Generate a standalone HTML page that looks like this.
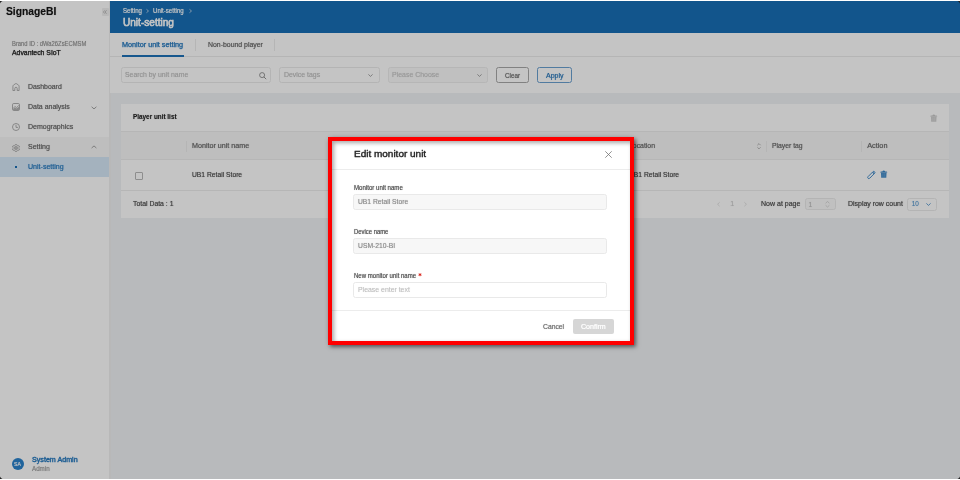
<!DOCTYPE html>
<html><head><meta charset="utf-8">
<style>
*{box-sizing:border-box;margin:0;padding:0}
html,body{width:960px;height:480px;overflow:hidden;background:#fff;font-family:"Liberation Sans",sans-serif;position:relative}
#root{position:absolute;left:0;top:0;width:960px;height:480px;will-change:transform;overflow:hidden}
.a{position:absolute}
.t{position:absolute;white-space:pre;line-height:1;transform-origin:0 0}
svg{position:absolute;overflow:visible}
</style></head><body><div id="root">
<!-- base app -->
<div class="a" style="left:0;top:1px;width:960px;height:478px;background:#f0f2f5"></div>
<!-- sidebar -->
<div class="a" style="left:0;top:1px;width:111px;height:478px;background:#fff;border-right:2px solid #f0f0f0"></div>
<div class="a" style="left:101.5px;top:7.5px;width:7px;height:8px;background:#f0f0f0;border-radius:1px"></div>
<svg style="left:103px;top:9.5px" width="4" height="4" viewBox="0 0 4 4"><path d="M1.9 0.3 L0.4 2 L1.9 3.7 M3.6 0.3 L2.1 2 L3.6 3.7" fill="none" stroke="#9a9a9a" stroke-width="0.6"/></svg>

<svg style="left:12px;top:83px" width="8" height="8" viewBox="0 0 8 8"><path d="M0.9 7.5 V3.2 Q0.9 2.6 1.4 2.2 L3.3 0.8 Q4 0.3 4.7 0.8 L6.6 2.2 Q7.1 2.6 7.1 3.2 V7.5 H5.2 V5.6 Q5.2 4.2 4 4.2 Q2.8 4.2 2.8 5.6 V7.5 Z" fill="none" stroke="#9c9c9c" stroke-width="0.8" stroke-linejoin="round"/></svg>
<svg style="left:12px;top:103px" width="8" height="8" viewBox="0 0 8 8"><rect x="0.5" y="0.5" width="7" height="7" rx="1.3" fill="none" stroke="#9c9c9c" stroke-width="0.8"/><path d="M1.2 5.6 L2.9 3.4 L4.4 4.6 L6.9 2.4" fill="none" stroke="#9a9a9a" stroke-width="0.7"/><path d="M1 7 V6.2 L2.9 4.6 L4.4 5.6 L7 3.8 V7 Z" fill="#b4b4b4"/></svg>
<svg style="left:91px;top:105.8px" width="6" height="4" viewBox="0 0 6 4"><path d="M0.6 0.8 L3 2.9 L5.4 0.8" fill="none" stroke="#8c8c8c" stroke-width="0.8"/></svg>
<svg style="left:12px;top:123px" width="8" height="8" viewBox="0 0 8 8"><circle cx="4" cy="4" r="3.5" fill="none" stroke="#9c9c9c" stroke-width="0.8"/><path d="M4 1.9 V4.4 H6" fill="none" stroke="#9c9c9c" stroke-width="0.8"/></svg>

<div class="a" style="left:0;top:137px;width:109px;height:20px;background:#f8f8f8"></div>
<svg style="left:12px;top:143.7px" width="8" height="8" viewBox="0 0 8 8"><path d="M3.3 0.5 H4.7 L5 1.5 L5.9 2 L6.9 1.7 L7.6 2.9 L6.8 3.6 V4.4 L7.6 5.1 L6.9 6.3 L5.9 6 L5 6.5 L4.7 7.5 H3.3 L3 6.5 L2.1 6 L1.1 6.3 L0.4 5.1 L1.2 4.4 V3.6 L0.4 2.9 L1.1 1.7 L2.1 2 L3 1.5 Z" fill="none" stroke="#9c9c9c" stroke-width="0.75" stroke-linejoin="round"/><circle cx="4" cy="4" r="1.3" fill="none" stroke="#8a8a8a" stroke-width="0.85"/></svg>
<svg style="left:91px;top:145px" width="6" height="4" viewBox="0 0 6 4"><path d="M0.6 3 L3 0.9 L5.4 3" fill="none" stroke="#8c8c8c" stroke-width="0.8"/></svg>

<div class="a" style="left:0;top:157px;width:109px;height:20px;background:#d6e8f7"></div>
<div class="a" style="left:15px;top:166px;width:2px;height:2px;background:#1a6fb5"></div>

<div class="a" style="left:11.8px;top:457.9px;width:12.6px;height:12.6px;border-radius:50%;background:#2a82cc"></div>

<!-- header -->
<div class="a" style="left:110px;top:1px;width:850px;height:32px;background:#186fb6"></div>
<svg style="left:146px;top:8.8px" width="3" height="4" viewBox="0 0 3 4"><path d="M0.5 0.3 L2.5 2 L0.5 3.7" fill="none" stroke="#dfe8f0" stroke-width="0.7"/></svg>
<svg style="left:189px;top:8.8px" width="3" height="4" viewBox="0 0 3 4"><path d="M0.5 0.3 L2.5 2 L0.5 3.7" fill="none" stroke="#dfe8f0" stroke-width="0.7"/></svg>

<!-- tabs -->
<div class="a" style="left:110px;top:33px;width:850px;height:24px;background:#fff;border-bottom:1px solid #ececec"></div>
<div class="a" style="left:122px;top:55px;width:62px;height:2px;background:#1f72b8"></div>
<div class="a" style="left:195px;top:39px;width:1px;height:12px;background:#ececec"></div>
<div class="a" style="left:274px;top:39px;width:1px;height:12px;background:#ececec"></div>

<!-- filters -->
<div class="a" style="left:110px;top:57px;width:850px;height:36px;background:#fff"></div>
<div class="a" style="left:120.5px;top:67.3px;width:150.3px;height:15.7px;border:1px solid #ebebeb;border-radius:2.5px"></div>
<svg style="left:259.3px;top:71.7px" width="8" height="8" viewBox="0 0 8 8"><circle cx="3.1" cy="3.1" r="2.5" fill="none" stroke="#8c8c8c" stroke-width="0.9"/><path d="M4.9 4.9 L7.2 7.2" stroke="#8c8c8c" stroke-width="0.95"/></svg>
<div class="a" style="left:279.4px;top:67.3px;width:100.2px;height:15.7px;border:1px solid #ebebeb;border-radius:2.5px"></div>
<svg style="left:368px;top:73.5px" width="5" height="3" viewBox="0 0 5 3"><path d="M0.4 0.4 L2.5 2.4 L4.6 0.4" fill="none" stroke="#8c8c8c" stroke-width="0.8"/></svg>
<div class="a" style="left:387.7px;top:67.3px;width:100.3px;height:15.5px;border:1px solid #ededed;border-radius:2.5px;background:#fafafa"></div>
<svg style="left:476.5px;top:73.5px" width="5" height="3" viewBox="0 0 5 3"><path d="M0.4 0.4 L2.5 2.4 L4.6 0.4" fill="none" stroke="#8c8c8c" stroke-width="0.8"/></svg>
<div class="a" style="left:496px;top:67.3px;width:33.4px;height:15.7px;border:1px solid #a8a8a8;border-bottom-width:1.5px;border-radius:2.5px"></div>
<div class="a" style="left:537.3px;top:67.3px;width:34.4px;height:15.7px;border:1px solid #6aa0d0;border-bottom-width:1.5px;border-radius:2.5px"></div>

<!-- card -->
<div class="a" style="left:121px;top:104px;width:828px;height:114px;background:#fff"></div>
<svg style="left:929.5px;top:113.7px" width="7.5" height="8" viewBox="0 0 7.5 8"><path d="M0.9 2.4 H6.6 L6.3 7.7 H1.2 Z" fill="#d0d0d0"/><path d="M0.2 2.6 Q0.2 1.4 1.3 1.4 H2.4 Q2.7 0.6 3.75 0.6 Q4.8 0.6 5.1 1.4 H6.2 Q7.3 1.4 7.3 2.6 Z" fill="#c8c8c8"/><path d="M2.9 3.4 V6.8 M4.6 3.4 V6.8" stroke="#e0e0e0" stroke-width="0.5"/></svg>
<div class="a" style="left:121px;top:131px;width:828px;height:29px;background:#f7f7f7;border-top:1px solid #ededed;border-bottom:1px solid #ededed"></div>
<div class="a" style="left:185.5px;top:140.5px;width:1px;height:11px;background:#ececec"></div>
<svg style="left:756.5px;top:142.8px" width="4" height="6.5" viewBox="0 0 4 6.5"><path d="M0.4 2.2 L2 0.6 L3.6 2.2 M0.4 4.3 L2 5.9 L3.6 4.3" fill="none" stroke="#9a9a9a" stroke-width="0.7"/></svg>
<div class="a" style="left:765.5px;top:140.5px;width:1px;height:11px;background:#ececec"></div>
<div class="a" style="left:861px;top:140.5px;width:1px;height:11px;background:#ececec"></div>

<div class="a" style="left:135px;top:172px;width:7.8px;height:7.8px;border:1px solid #b8b8b8;border-radius:1px"></div>
<svg style="left:866.5px;top:170.5px" width="8.5" height="8" viewBox="0 0 8.5 8"><rect x="-1.15" y="-4.6" width="2.3" height="9.2" rx="1.15" transform="translate(4.3,4) rotate(45)" fill="none" stroke="#3b86c6" stroke-width="0.9"/><path d="M5.6 1.2 L7.2 2.8" stroke="#3b86c6" stroke-width="1.1"/></svg>
<svg style="left:879.5px;top:170.3px" width="7.5" height="8" viewBox="0 0 7.5 8"><path d="M0.9 2.4 H6.6 L6.3 7.7 H1.2 Z" fill="#4a90cc"/><path d="M0.2 2.6 Q0.2 1.4 1.3 1.4 H2.4 Q2.7 0.6 3.75 0.6 Q4.8 0.6 5.1 1.4 H6.2 Q7.3 1.4 7.3 2.6 Z" fill="#3b86c6"/><path d="M2.9 3.4 V6.8 M4.6 3.4 V6.8" stroke="#6aa6d8" stroke-width="0.5"/></svg>
<div class="a" style="left:121px;top:190px;width:828px;height:1px;background:#ededed"></div>

<svg style="left:717px;top:202px" width="3" height="4.5" viewBox="0 0 3 4.5"><path d="M2.6 0.3 L0.6 2.25 L2.6 4.2" fill="none" stroke="#d6d6d6" stroke-width="0.7"/></svg>
<svg style="left:744px;top:202px" width="3" height="4.5" viewBox="0 0 3 4.5"><path d="M0.4 0.3 L2.4 2.25 L0.4 4.2" fill="none" stroke="#d6d6d6" stroke-width="0.7"/></svg>
<div class="a" style="left:804.5px;top:198.3px;width:31px;height:12px;border:1px solid #ebebeb;border-radius:2.5px;background:#fafafa"></div>
<svg style="left:825px;top:201px" width="5" height="6.5" viewBox="0 0 5 6.5"><path d="M0.6 2.2 L2.5 0.5 L4.4 2.2 M0.6 4.3 L2.5 6 L4.4 4.3" fill="none" stroke="#c8c8c8" stroke-width="0.7"/></svg>
<div class="a" style="left:907.4px;top:198.3px;width:29.8px;height:12.3px;border:1px solid #ebebeb;border-radius:2.5px"></div>
<svg style="left:926px;top:203px" width="5" height="3" viewBox="0 0 5 3"><path d="M0.4 0.4 L2.5 2.4 L4.6 0.4" fill="none" stroke="#3b86c6" stroke-width="0.8"/></svg>

<div class="t" style="left:6.30px;top:6px;font-size:10.6px;transform:scaleX(0.9725);font-weight:bold;color:#141414;-webkit-text-stroke:0px #141414;text-shadow:0 0 1.0px rgba(20,20,20,0.45)">SignageBI</div>
<div class="t" style="left:12.00px;top:41px;font-size:6.3px;transform:scaleX(0.9250);font-weight:normal;color:#969696;-webkit-text-stroke:0.1px #969696;text-shadow:0 0 1.0px rgba(150,150,150,0.45)">Brand ID : dWa26ZsECMSM</div>
<div class="t" style="left:12.00px;top:50px;font-size:7.1px;transform:scaleX(0.9667);font-weight:normal;color:#262626;-webkit-text-stroke:0.25px #262626;text-shadow:0 0 1.0px rgba(38,38,38,0.45)">Advantech SIoT</div>
<div class="t" style="left:28.00px;top:83px;font-size:7.3px;transform:scaleX(0.9444);font-weight:normal;color:#6a6a6a;-webkit-text-stroke:0.15px #6a6a6a;text-shadow:0 0 1.0px rgba(106,106,106,0.45)">Dashboard</div>
<div class="t" style="left:28.00px;top:103px;font-size:7.3px;transform:scaleX(0.9545);font-weight:normal;color:#6a6a6a;-webkit-text-stroke:0.15px #6a6a6a;text-shadow:0 0 1.0px rgba(106,106,106,0.45)">Data analysis</div>
<div class="t" style="left:28.00px;top:123px;font-size:7.3px;transform:scaleX(0.9617);font-weight:normal;color:#6a6a6a;-webkit-text-stroke:0.15px #6a6a6a;text-shadow:0 0 1.0px rgba(106,106,106,0.45)">Demographics</div>
<div class="t" style="left:28.00px;top:143px;font-size:7.3px;transform:scaleX(0.9609);font-weight:normal;color:#6a6a6a;-webkit-text-stroke:0.15px #6a6a6a;text-shadow:0 0 1.0px rgba(106,106,106,0.45)">Setting</div>
<div class="t" style="left:28.00px;top:163px;font-size:7.3px;transform:scaleX(0.9676);font-weight:normal;color:#2a7cc0;-webkit-text-stroke:0.15px #2a7cc0;text-shadow:0 0 1.0px rgba(42,124,192,0.45)">Unit-setting</div>
<div class="t" style="left:14.25px;top:461px;font-size:6.2px;transform:scaleX(0.8333);font-weight:normal;color:#ffffff;-webkit-text-stroke:0.1px #ffffff;text-shadow:0 0 1.0px rgba(255,255,255,0.45)">SA</div>
<div class="t" style="left:32.00px;top:456px;font-size:7.2px;transform:scaleX(0.9935);font-weight:normal;color:#2a7cc0;-webkit-text-stroke:0.35px #2a7cc0;text-shadow:0 0 1.0px rgba(42,124,192,0.45)">System Admin</div>
<div class="t" style="left:32.00px;top:466px;font-size:6.3px;transform:scaleX(0.9889);font-weight:normal;color:#a0a0a0;-webkit-text-stroke:0.1px #a0a0a0;text-shadow:0 0 1.0px rgba(160,160,160,0.45)">Admin</div>
<div class="t" style="left:122.50px;top:8px;font-size:6.5px;transform:scaleX(0.9350);font-weight:normal;color:#ffffff;-webkit-text-stroke:0.1px #ffffff;text-shadow:0 0 1.0px rgba(255,255,255,0.45)">Setting</div>
<div class="t" style="left:153.40px;top:8px;font-size:6.5px;transform:scaleX(0.9333);font-weight:normal;color:#ffffff;-webkit-text-stroke:0.1px #ffffff;text-shadow:0 0 1.0px rgba(255,255,255,0.45)">Unit-setting</div>
<div class="t" style="left:122.80px;top:17px;font-size:10.5px;transform:scaleX(0.9585);font-weight:normal;color:#ffffff;-webkit-text-stroke:0.55px #ffffff;text-shadow:0 0 1.0px rgba(255,255,255,0.45)">Unit-setting</div>
<div class="t" style="left:122.20px;top:41px;font-size:7.3px;transform:scaleX(0.9919);font-weight:normal;color:#2a7cc0;-webkit-text-stroke:0.25px #2a7cc0;text-shadow:0 0 1.0px rgba(42,124,192,0.45)">Monitor unit setting</div>
<div class="t" style="left:207.70px;top:41px;font-size:7.3px;transform:scaleX(0.9466);font-weight:normal;color:#6a6a6a;-webkit-text-stroke:0.15px #6a6a6a;text-shadow:0 0 1.0px rgba(106,106,106,0.45)">Non-bound player</div>
<div class="t" style="left:125.00px;top:71px;font-size:7.3px;transform:scaleX(0.9448);font-weight:normal;color:#c0c0c0;-webkit-text-stroke:0.1px #c0c0c0;text-shadow:0 0 1.0px rgba(192,192,192,0.45)">Search by unit name</div>
<div class="t" style="left:283.80px;top:71px;font-size:7.3px;transform:scaleX(0.9474);font-weight:normal;color:#c0c0c0;-webkit-text-stroke:0.1px #c0c0c0;text-shadow:0 0 1.0px rgba(192,192,192,0.45)">Device tags</div>
<div class="t" style="left:392.10px;top:71px;font-size:7.3px;transform:scaleX(0.9520);font-weight:normal;color:#c8c8c8;-webkit-text-stroke:0.1px #c8c8c8;text-shadow:0 0 1.0px rgba(200,200,200,0.45)">Please Choose</div>
<div class="t" style="left:505.00px;top:72px;font-size:7.3px;transform:scaleX(0.8667);font-weight:normal;color:#6e6e6e;-webkit-text-stroke:0.12px #6e6e6e;text-shadow:0 0 1.0px rgba(110,110,110,0.45)">Clear</div>
<div class="t" style="left:546.00px;top:72px;font-size:7.3px;transform:scaleX(0.9611);font-weight:normal;color:#2a78ba;-webkit-text-stroke:0.12px #2a78ba;text-shadow:0 0 1.0px rgba(42,120,186,0.45)">Apply</div>
<div class="t" style="left:133.00px;top:114px;font-size:7.1px;transform:scaleX(0.8980);font-weight:bold;color:#262626;-webkit-text-stroke:0px #262626;text-shadow:0 0 1.0px rgba(38,38,38,0.45)">Player unit list</div>
<div class="t" style="left:192.20px;top:142px;font-size:7.3px;transform:scaleX(0.9793);font-weight:normal;color:#6c6c6c;-webkit-text-stroke:0.15px #6c6c6c;text-shadow:0 0 1.0px rgba(108,108,108,0.45)">Monitor unit name</div>
<div class="t" style="left:628.80px;top:142px;font-size:7.3px;transform:scaleX(0.9429);font-weight:normal;color:#6c6c6c;-webkit-text-stroke:0.15px #6c6c6c;text-shadow:0 0 1.0px rgba(108,108,108,0.45)">Location</div>
<div class="t" style="left:772.30px;top:142px;font-size:7.3px;transform:scaleX(0.9333);font-weight:normal;color:#6c6c6c;-webkit-text-stroke:0.15px #6c6c6c;text-shadow:0 0 1.0px rgba(108,108,108,0.45)">Player tag</div>
<div class="t" style="left:867.20px;top:142px;font-size:7.3px;transform:scaleX(1.0000);font-weight:normal;color:#6c6c6c;-webkit-text-stroke:0.15px #6c6c6c;text-shadow:0 0 1.0px rgba(108,108,108,0.45)">Action</div>
<div class="t" style="left:192.20px;top:171px;font-size:7.3px;transform:scaleX(0.9222);font-weight:normal;color:#505050;-webkit-text-stroke:0.12px #505050;text-shadow:0 0 1.0px rgba(80,80,80,0.45)">UB1 Retail Store</div>
<div class="t" style="left:628.80px;top:171px;font-size:7.3px;transform:scaleX(0.9222);font-weight:normal;color:#505050;-webkit-text-stroke:0.12px #505050;text-shadow:0 0 1.0px rgba(80,80,80,0.45)">UB1 Retail Store</div>
<div class="t" style="left:133.10px;top:200px;font-size:7.3px;transform:scaleX(0.9419);font-weight:normal;color:#505050;-webkit-text-stroke:0.12px #505050;text-shadow:0 0 1.0px rgba(80,80,80,0.45)">Total Data : 1</div>
<div class="t" style="left:730.20px;top:200px;font-size:7.0px;transform:scaleX(1.0000);font-weight:normal;color:#cccccc;-webkit-text-stroke:0.05px #cccccc;text-shadow:0 0 1.0px rgba(204,204,204,0.45)">1</div>
<div class="t" style="left:761.00px;top:200px;font-size:7.3px;transform:scaleX(0.9610);font-weight:normal;color:#505050;-webkit-text-stroke:0.12px #505050;text-shadow:0 0 1.0px rgba(80,80,80,0.45)">Now at page</div>
<div class="t" style="left:808.60px;top:202px;font-size:6.6px;transform:scaleX(1.0000);font-weight:normal;color:#bdbdbd;-webkit-text-stroke:0.05px #bdbdbd;text-shadow:0 0 1.0px rgba(189,189,189,0.45)">1</div>
<div class="t" style="left:847.80px;top:200px;font-size:7.3px;transform:scaleX(0.9517);font-weight:normal;color:#505050;-webkit-text-stroke:0.12px #505050;text-shadow:0 0 1.0px rgba(80,80,80,0.45)">Display row count</div>
<div class="t" style="left:911.80px;top:201px;font-size:6.4px;transform:scaleX(1.0000);font-weight:normal;color:#5a9ad0;-webkit-text-stroke:0.05px #5a9ad0;text-shadow:0 0 1.0px rgba(90,154,208,0.45)">10</div>

<!-- overlay -->
<div class="a" style="left:0;top:1px;width:960px;height:478px;background:rgba(0,0,0,0.23)"></div>

<!-- modal -->
<div class="a" style="left:330px;top:139px;width:302px;height:204px;background:#fff;box-shadow:0 0 6px rgba(0,0,0,0.2)"></div>
<svg style="left:605px;top:151px" width="7" height="7" viewBox="0 0 7 7"><path d="M0.3 0.3 L6.7 6.7 M6.7 0.3 L0.3 6.7" stroke="#6e6e6e" stroke-width="0.75"/></svg>
<div class="a" style="left:330px;top:169px;width:302px;height:1px;background:#ececec"></div>
<div class="a" style="left:353.1px;top:194.2px;width:253.5px;height:15.4px;border:1px solid #e9e9e9;border-radius:2.5px;background:#f7f7f7"></div>
<div class="a" style="left:353.1px;top:238.3px;width:253.5px;height:15.4px;border:1px solid #e9e9e9;border-radius:2.5px;background:#f7f7f7"></div>
<div class="a" style="left:353.1px;top:282.3px;width:253.5px;height:15.4px;border:1px solid #e9e9e9;border-radius:2.5px;background:#fff"></div>
<svg style="left:418px;top:273px" width="4" height="4" viewBox="0 0 4 4"><path d="M2 0.2 L2 3.2 M0.6 1 L3.4 2.4 M3.4 1 L0.6 2.4" stroke="#d9251c" stroke-width="0.9"/></svg>
<div class="a" style="left:330px;top:310px;width:302px;height:1px;background:#ececec"></div>
<div class="a" style="left:572.5px;top:318.7px;width:41.9px;height:15.7px;background:#d6d6d6;border-radius:2px"></div>

<div class="t" style="left:353.80px;top:149px;font-size:9.9px;transform:scaleX(1.0111);font-weight:normal;color:#262626;-webkit-text-stroke:0.3px #262626;text-shadow:0 0 1.0px rgba(38,38,38,0.45)">Edit monitor unit</div>
<div class="t" style="left:353.60px;top:185px;font-size:6.4px;transform:scaleX(0.9549);font-weight:normal;color:#505050;-webkit-text-stroke:0.12px #505050;text-shadow:0 0 1.0px rgba(80,80,80,0.45)">Monitor unit name</div>
<div class="t" style="left:357.90px;top:198px;font-size:7.0px;transform:scaleX(0.9635);font-weight:normal;color:#8c8c8c;-webkit-text-stroke:0.1px #8c8c8c;text-shadow:0 0 1.0px rgba(140,140,140,0.45)">UB1 Retail Store</div>
<div class="t" style="left:353.60px;top:229px;font-size:6.4px;transform:scaleX(0.9216);font-weight:normal;color:#505050;-webkit-text-stroke:0.12px #505050;text-shadow:0 0 1.0px rgba(80,80,80,0.45)">Device name</div>
<div class="t" style="left:358.00px;top:242px;font-size:7.0px;transform:scaleX(0.9658);font-weight:normal;color:#8c8c8c;-webkit-text-stroke:0.1px #8c8c8c;text-shadow:0 0 1.0px rgba(140,140,140,0.45)">USM-210-BI</div>
<div class="t" style="left:353.60px;top:273px;font-size:6.4px;transform:scaleX(0.9455);font-weight:normal;color:#505050;-webkit-text-stroke:0.12px #505050;text-shadow:0 0 1.0px rgba(80,80,80,0.45)">New monitor unit name</div>
<div class="t" style="left:358.00px;top:286px;font-size:7.0px;transform:scaleX(0.9868);font-weight:normal;color:#c0c0c0;-webkit-text-stroke:0.05px #c0c0c0;text-shadow:0 0 1.0px rgba(192,192,192,0.45)">Please enter text</div>
<div class="t" style="left:543.10px;top:323px;font-size:7.0px;transform:scaleX(0.9682);font-weight:normal;color:#707070;-webkit-text-stroke:0.15px #707070;text-shadow:0 0 1.0px rgba(112,112,112,0.45)">Cancel</div>
<div class="t" style="left:581.00px;top:323px;font-size:7.0px;transform:scaleX(1.0100);font-weight:normal;color:#ffffff;-webkit-text-stroke:0.15px #ffffff;text-shadow:0 0 1.0px rgba(255,255,255,0.45)">Confirm</div>

<!-- red annotation -->
<div class="a" style="left:328px;top:137px;width:306px;height:208px;border:4px solid #ff0000;box-shadow:2px 2px 4px rgba(0,0,0,0.5), inset 2px 2px 4px rgba(0,0,0,0.35)"></div>

<!-- white edges & corners -->
<div class="a" style="left:0;top:0;width:960px;height:1px;background:#fff"></div>
<div class="a" style="left:0;top:479px;width:960px;height:1px;background:#fff"></div>
<svg style="left:0;top:1px" width="3" height="3" viewBox="0 0 3 3"><path d="M0 0 H2.5 Q0.6 0.6 0 2.5 Z" fill="#222"/></svg>
<svg style="left:0;top:476px" width="3" height="3" viewBox="0 0 3 3"><path d="M0 3 H2.5 Q0.6 2.4 0 0.5 Z" fill="#222"/></svg>
<svg style="left:957px;top:1px" width="3" height="3" viewBox="0 0 3 3"><path d="M3 0 H0.5 Q2.4 0.6 3 2.5 Z" fill="#222"/></svg>
<svg style="left:957px;top:476px" width="3" height="3" viewBox="0 0 3 3"><path d="M3 3 H0.5 Q2.4 2.4 3 0.5 Z" fill="#222"/></svg>
</div></body></html>
